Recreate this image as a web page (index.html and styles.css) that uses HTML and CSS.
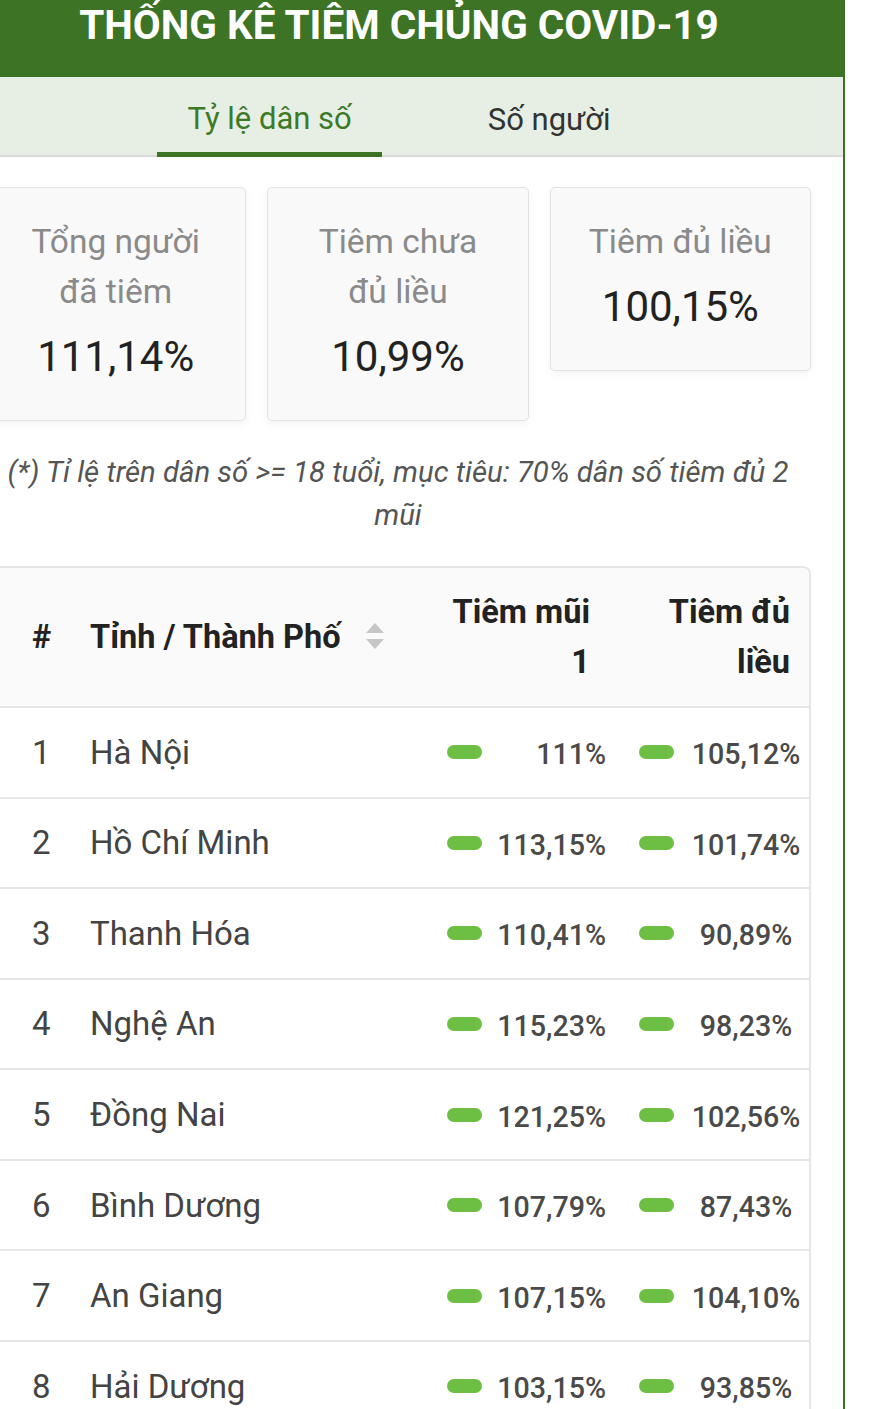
FILE: index.html
```html
<!DOCTYPE html>
<html lang="vi">
<head>
<meta charset="utf-8">
<title>Thống kê tiêm chủng COVID-19</title>
<link rel="stylesheet" href="styles.css">
</head>
<body>
<div class="page">
  <header class="top">
    <h1 class="title">THỐNG KÊ TIÊM CHỦNG COVID-19</h1>
  </header>
  <nav class="tabs">
    <div class="tabs-inner">
      <span class="tab active">Tỷ lệ dân số</span>
      <span class="tab">Số người</span>
    </div>
  </nav>
  <main class="content">
    <section class="cards">
      <div class="card">
        <div class="card-label">Tổng người đã tiêm</div>
        <div class="card-value">111,14%</div>
      </div>
      <div class="card">
        <div class="card-label">Tiêm chưa đủ liều</div>
        <div class="card-value">10,99%</div>
      </div>
      <div class="card">
        <div class="card-label">Tiêm đủ liều</div>
        <div class="card-value">100,15%</div>
      </div>
    </section>
    <p class="note">(*) Tỉ lệ trên dân số &gt;= 18 tuổi, mục tiêu: 70% dân số tiêm đủ 2 mũi</p>
    <section class="table">
      <div class="row head">
        <div class="c-num">#</div>
        <div class="c-name">Tỉnh / Thành Phố
          <svg class="sort" width="18" height="28" viewBox="0 0 18 28"><path d="M9 0 L18 10 L0 10 Z" fill="#c6c6c6"/><path d="M0 16 L18 16 L9 26 Z" fill="#c6c6c6"/></svg>
        </div>
        <div class="c-v1">Tiêm mũi 1</div>
        <div class="c-v2">Tiêm đủ liều</div>
      </div>
      <div class="row"><div class="c-num">1</div><div class="c-name">Hà Nội</div><div class="c-v1"><span class="pill"></span><span class="val">111%</span></div><div class="c-v2"><span class="pill"></span><span class="val">105,12%</span></div></div>
      <div class="row"><div class="c-num">2</div><div class="c-name">Hồ Chí Minh</div><div class="c-v1"><span class="pill"></span><span class="val">113,15%</span></div><div class="c-v2"><span class="pill"></span><span class="val">101,74%</span></div></div>
      <div class="row"><div class="c-num">3</div><div class="c-name">Thanh Hóa</div><div class="c-v1"><span class="pill"></span><span class="val">110,41%</span></div><div class="c-v2"><span class="pill"></span><span class="val">90,89%</span></div></div>
      <div class="row"><div class="c-num">4</div><div class="c-name">Nghệ An</div><div class="c-v1"><span class="pill"></span><span class="val">115,23%</span></div><div class="c-v2"><span class="pill"></span><span class="val">98,23%</span></div></div>
      <div class="row"><div class="c-num">5</div><div class="c-name">Đồng Nai</div><div class="c-v1"><span class="pill"></span><span class="val">121,25%</span></div><div class="c-v2"><span class="pill"></span><span class="val">102,56%</span></div></div>
      <div class="row"><div class="c-num">6</div><div class="c-name">Bình Dương</div><div class="c-v1"><span class="pill"></span><span class="val">107,79%</span></div><div class="c-v2"><span class="pill"></span><span class="val">87,43%</span></div></div>
      <div class="row"><div class="c-num">7</div><div class="c-name">An Giang</div><div class="c-v1"><span class="pill"></span><span class="val">107,15%</span></div><div class="c-v2"><span class="pill"></span><span class="val">104,10%</span></div></div>
      <div class="row"><div class="c-num">8</div><div class="c-name">Hải Dương</div><div class="c-v1"><span class="pill"></span><span class="val">103,15%</span></div><div class="c-v2"><span class="pill"></span><span class="val">93,85%</span></div></div>
    </section>
  </main>
</div>
</body>
</html>
```
FILE: styles.css
```css
* { box-sizing: border-box; }
html, body { margin: 0; padding: 0; background: #fff; }
body {
  font-family: Roboto, "Noto Sans", "Liberation Sans", sans-serif;
  color: #444;
  width: 870px;
  height: 1409px;
  overflow: hidden;
}
.page {
  width: 845px;
  min-height: 1409px;
  border-right: 2px solid #3b7123;
}
.top {
  background: #3c7324;
  height: 77px;
}
.title {
  margin: 0;
  padding-right: 45px;
  text-align: center;
  color: #fff;
  font-weight: 700;
  font-size: 40.5px;
  line-height: 50px;
}
.tabs {
  background: #e7efe4;
  height: 80px;
  border-bottom: 2px solid #dadada;
}
.tabs-inner {
  display: flex;
  justify-content: center;
  gap: 76px;
  height: 100%;
  padding-right: 45px;
}
.tab {
  display: flex;
  align-items: center;
  padding: 7px 30px 0;
  font-size: 31px;
  color: #333;
}
.tab.active {
  color: #3c7a25;
  border-bottom: 5px solid #3c7324;
  margin-bottom: -2px;
}
.content {
  margin: 0 32px 0 -15px;
}
.cards {
  display: grid;
  grid-template-columns: repeat(3, 1fr);
  gap: 21px;
  align-items: start;
  margin-top: 30px;
}
.card {
  background: #f9f9f9;
  border: 1px solid #e2e2e2;
  border-radius: 5px;
  box-shadow: 0 3px 10px rgba(0, 0, 0, 0.05);
  padding: 29px 34px 33px;
  text-align: center;
}
.card-label {
  font-size: 33.5px;
  line-height: 50px;
  color: #8a8a8a;
}
.card-value {
  margin-top: 10px;
  font-size: 42px;
  line-height: 60px;
  color: #222;
}
.note {
  margin: 30px 0 0;
  padding: 0 6px;
  text-align: center;
  font-style: italic;
  font-size: 29.3px;
  line-height: 43px;
  color: #555;
}
.table {
  margin-top: 29px;
  border: 2px solid #e6e6e6;
  border-bottom: none;
  border-radius: 8px 8px 0 0;
  overflow: hidden;
}
.row {
  display: grid;
  grid-template-columns: 103px 350px 190px 181px;
  align-items: center;
  height: 90.57px;
  border-bottom: 2px solid #e6e6e6;
  font-size: 33px;
  color: #444;
}
.row.head {
  height: 140px;
  background: #fafafa;
  font-weight: 700;
  font-size: 32.5px;
  line-height: 50px;
  color: #222;
}
.c-num { padding-left: 45px; }
.c-name { display: flex; align-items: center; }
.sort { margin-left: 25px; }
.c-v1, .c-v2 {
  display: flex;
  align-items: center;
  justify-content: space-between;
}
.c-v1 { padding: 0 24px 0 7px; }
.c-v2 { padding: 0 10px 0 9px; }
.head .c-v1, .head .c-v2 { display: block; text-align: right; }
.head .c-v1 { padding: 0 40px 0 10px; }
.head .c-v2 { padding: 0 21px 0 20px; }
.pill {
  width: 35px;
  height: 14px;
  border-radius: 7px;
  background: #6cbf43;
}
.val {
  font-size: 28.6px;
  font-weight: 500;
  color: #4a4a4a;
  padding-top: 4px;
}
.c-v2 .val {
  width: 110px;
  text-align: center;
}
```
